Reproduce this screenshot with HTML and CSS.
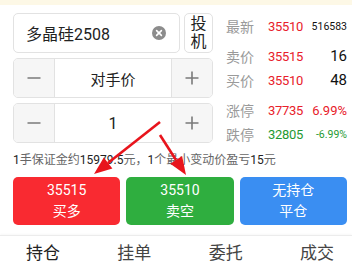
FILE: index.html
```html
<!doctype html>
<html>
<head>
<meta charset="utf-8">
<title>下单</title>
<link rel="stylesheet" href="styles.css">
</head>
<body>
<div class="topbar"></div>
<div class="main">
	<div class="form">
		<div class="row">
			<div class="input">
				<span class="name">多晶硅2508</span>
				<svg class="clear" width="14" height="14" viewBox="0 0 14 14"><circle cx="7" cy="7" r="7" fill="#8c8c8c"/><path d="M4.6 4.6L9.4 9.4M9.4 4.6L4.6 9.4" stroke="#fff" stroke-width="1.6" stroke-linecap="round"/></svg>
			</div>
			<div class="mode"><span>投</span><span>机</span></div>
		</div>
		<div class="stepper">
			<span class="step"><svg width="14" height="14" viewBox="0 0 14 14"><path d="M0.5 7H13.5" stroke="#7a7a7a" stroke-width="1.6"/></svg></span>
			<span class="val">对手价</span>
			<span class="step"><svg width="14" height="14" viewBox="0 0 14 14"><path d="M0.5 7H13.5M7 0.5V13.5" stroke="#7a7a7a" stroke-width="1.6"/></svg></span>
		</div>
		<div class="stepper">
			<span class="step"><svg width="14" height="14" viewBox="0 0 14 14"><path d="M0.5 7H13.5" stroke="#7a7a7a" stroke-width="1.6"/></svg></span>
			<span class="val num">1</span>
			<span class="step"><svg width="14" height="14" viewBox="0 0 14 14"><path d="M0.5 7H13.5M7 0.5V13.5" stroke="#7a7a7a" stroke-width="1.6"/></svg></span>
		</div>
	</div>
	<div class="quote">
		<div class="q"><span class="lbl">最新</span><span class="v red">35510</span><span class="n tiny">516583</span></div>
		<div class="q gap"><span class="lbl">卖价</span><span class="v red">35515</span><span class="n">16</span></div>
		<div class="q"><span class="lbl">买价</span><span class="v red">35510</span><span class="n">48</span></div>
		<div class="q gap"><span class="lbl">涨停</span><span class="v red">37735</span><span class="n pct red">6.99%</span></div>
		<div class="q"><span class="lbl">跌停</span><span class="v green">32805</span><span class="n pct small green">-6.99%</span></div>
	</div>
</div>
<p class="info"><b>1</b>手保证金约<b>15979.5</b>元，<b>1</b>个最小变动价盈亏<b>15</b>元</p>
<div class="actions">
	<a href="javascript:;" class="btn buy">35515<br>买多</a>
	<a href="javascript:;" class="btn sell">35510<br>卖空</a>
	<a href="javascript:;" class="btn close">无持仓<br>平仓</a>
</div>
<div class="tabs">
	<span class="tab active">持仓</span>
	<span class="tab">挂单</span>
	<span class="tab">委托</span>
	<span class="tab">成交</span>
</div>
<svg class="arrows" width="352" height="268" viewBox="0 0 352 268">
	<g stroke="#e8141c" stroke-width="2.6" fill="#e8141c">
		<line x1="160" y1="122" x2="108" y2="163"/>
		<polygon points="94,174 112.4,168.4 103.8,157.4" stroke="none"/>
		<line x1="160" y1="135" x2="176" y2="160"/>
		<polygon points="186,175 170.3,163.7 182.1,156.1" stroke="none"/>
	</g>
</svg>
</body>
</html>
```

FILE: styles.css
```css
*{margin:0; padding:0; box-sizing:border-box;}
body{width:352px; height:268px; overflow:hidden; position:relative; background:#fff; font-family:Roboto, "Noto Sans CJK SC", sans-serif; color:#222;}
a{text-decoration:none;}
.topbar{height:5px; background:#fdf8e6;}
.main{display:flex; padding:8px 5px 0 13px;}
.form{width:200px;}
.row{display:flex; height:40px;}
.input{width:167px; border:1px solid #e2e2e2; border-radius:5px; display:flex; align-items:center; padding:0 13px 0 12px;}
.input .name{flex:1; font-size:16px;}
.mode{margin-left:4px; width:29px; border:1px solid #e2e2e2; border-radius:5px; font-size:16px; line-height:18px; display:flex; flex-direction:column; align-items:center; justify-content:center;}
.stepper{display:flex; height:40px; margin-top:5px; border:1px solid #e2e2e2; border-radius:5px; overflow:hidden;}
.step{width:40px; background:#f6f6f6; display:flex; align-items:center; justify-content:center;}
.val{flex:1; border-left:1px solid #e2e2e2; border-right:1px solid #e2e2e2; display:flex; align-items:center; justify-content:center; font-size:15px;}
.val.num{font-size:16px;}
.quote{flex:1; margin-left:13px; padding-top:1px;}
.q{display:flex; align-items:center; height:24px;}
.q.gap{margin-top:6px;}
.lbl{width:42px; color:#9a9a9a; font-size:14px;}
.v{font-size:13px; letter-spacing:-0.3px;}
.n{flex:1; text-align:right; font-size:15px; color:#111;}
.n.tiny{font-size:10.5px;}
.n.pct{font-size:13px;}
.n.small{font-size:10.5px;}
.red{color:#e8202a !important;}
.green{color:#1f9a32 !important;}
.info{margin:6px 0 0 13px; font-size:12px; line-height:16px; color:#666;}
.info b{font-weight:normal; color:#222;}
.actions{display:flex; gap:6px; padding:0 5px 0 13px; margin-top:9px;}
.btn{flex:1; height:48px; border-radius:5px; color:#fff; font-size:14px; line-height:21px; text-align:center; padding-top:3px;}
.buy{background:#f92a31;}
.sell{background:#2fae3f;}
.close{background:#3a8ef2;}
.tabs{margin-top:10px; border-top:1px solid #ececec; box-shadow:0 -1px 2px rgba(0,0,0,0.03); height:36px; display:flex; justify-content:space-between; padding:6px 18px 0 26px;}
.tab{width:34px; font-size:17px; line-height:22px; color:#444; text-align:center;}
.tab.active{color:#222;}
.tab.active::after{content:""; display:block; width:23px; height:2px; background:#e8202a; margin:4px auto 0; border-radius:1px;}
.arrows{position:absolute; left:0; top:0; pointer-events:none;}
```
